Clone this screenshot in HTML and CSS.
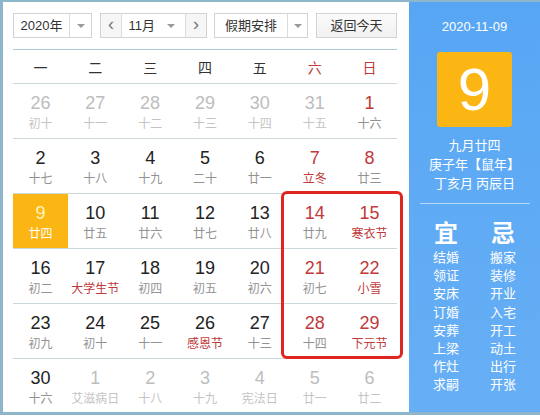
FILE: index.html
```html
<!DOCTYPE html>
<html lang="zh">
<head>
<meta charset="utf-8">
<link rel="stylesheet" href="styles.css">
</head>
<body>
<div class="frame">
  <div class="main">
    <div class="toolbar">
      <div class="select year"><span class="sel-text">2020年</span><span class="sel-arrow"><i class="tri"></i></span></div>
      <div class="select month">
        <span class="nav">&lsaquo;</span>
        <span class="sel-text mtext">11月<i class="tri"></i></span>
        <span class="nav">&rsaquo;</span>
      </div>
      <div class="select holiday"><span class="sel-text">假期安排</span><span class="sel-arrow"><i class="tri"></i></span></div>
      <div class="btn">返回今天</div>
    </div>
    <div class="week">
      <span>一</span><span>二</span><span>三</span><span>四</span><span>五</span><span class="red">六</span><span class="red">日</span>
    </div>
    <div class="days">
      <div class="cell other"><b>26</b><em>初十</em></div>
      <div class="cell other"><b>27</b><em>十一</em></div>
      <div class="cell other"><b>28</b><em>十二</em></div>
      <div class="cell other"><b>29</b><em>十三</em></div>
      <div class="cell other"><b>30</b><em>十四</em></div>
      <div class="cell other"><b>31</b><em>十五</em></div>
      <div class="cell wkend"><b>1</b><em>十六</em></div>

      <div class="cell"><b>2</b><em>十七</em></div>
      <div class="cell"><b>3</b><em>十八</em></div>
      <div class="cell"><b>4</b><em>十九</em></div>
      <div class="cell"><b>5</b><em>二十</em></div>
      <div class="cell"><b>6</b><em>廿一</em></div>
      <div class="cell wkend"><b>7</b><em class="fest">立冬</em></div>
      <div class="cell wkend"><b>8</b><em>廿三</em></div>

      <div class="cell today"><b>9</b><em>廿四</em></div>
      <div class="cell"><b>10</b><em>廿五</em></div>
      <div class="cell"><b>11</b><em>廿六</em></div>
      <div class="cell"><b>12</b><em>廿七</em></div>
      <div class="cell"><b>13</b><em>廿八</em></div>
      <div class="cell wkend"><b>14</b><em>廿九</em></div>
      <div class="cell wkend"><b>15</b><em class="fest">寒衣节</em></div>

      <div class="cell"><b>16</b><em>初二</em></div>
      <div class="cell"><b>17</b><em class="fest">大学生节</em></div>
      <div class="cell"><b>18</b><em>初四</em></div>
      <div class="cell"><b>19</b><em>初五</em></div>
      <div class="cell"><b>20</b><em>初六</em></div>
      <div class="cell wkend"><b>21</b><em>初七</em></div>
      <div class="cell wkend"><b>22</b><em class="fest">小雪</em></div>

      <div class="cell"><b>23</b><em>初九</em></div>
      <div class="cell"><b>24</b><em>初十</em></div>
      <div class="cell"><b>25</b><em>十一</em></div>
      <div class="cell"><b>26</b><em class="fest">感恩节</em></div>
      <div class="cell"><b>27</b><em>十三</em></div>
      <div class="cell wkend"><b>28</b><em>十四</em></div>
      <div class="cell wkend"><b>29</b><em class="fest">下元节</em></div>

      <div class="cell last"><b>30</b><em>十六</em></div>
      <div class="cell last other"><b>1</b><em>艾滋病日</em></div>
      <div class="cell last other"><b>2</b><em>十八</em></div>
      <div class="cell last other"><b>3</b><em>十九</em></div>
      <div class="cell last other"><b>4</b><em>宪法日</em></div>
      <div class="cell last other"><b>5</b><em>廿一</em></div>
      <div class="cell last other"><b>6</b><em>廿二</em></div>
    </div>
    <div class="mark"></div>
  </div>
  <div class="side">
    <div class="date">2020-11-09</div>
    <div class="bigday">9</div>
    <div class="lunar">
      <div>九月廿四</div>
      <div>庚子年【鼠年】</div>
      <div>丁亥月 丙辰日</div>
    </div>
    <div class="yiji">
      <div class="col">
        <div class="head">宜</div>
        <div>结婚</div><div>领证</div><div>安床</div><div>订婚</div><div>安葬</div><div>上梁</div><div>作灶</div><div>求嗣</div>
      </div>
      <div class="col">
        <div class="head">忌</div>
        <div>搬家</div><div>装修</div><div>开业</div><div>入宅</div><div>开工</div><div>动土</div><div>出行</div><div>开张</div>
      </div>
    </div>
  </div>
</div>
</body>
</html>
```
FILE: styles.css
```css
* { box-sizing: border-box; }
html, body { margin: 0; padding: 0; background: #fff; }
body { font-family: "Liberation Sans", "Noto Sans CJK SC", sans-serif; color: #333; }

.frame {
  width: 540px;
  height: 415px;
  display: flex;
  border-top: 2px solid #8db6ca;
  border-left: 3px solid #8db6ca;
  border-bottom: 3px solid #8db6ca;
}

.main {
  position: relative;
  width: 406px;
  padding: 11px 12px 0 10px;
}

.toolbar {
  display: flex;
  height: 25px;
  font-size: 13px;
  font-family: "Liberation Sans", "Noto Sans CJK SC", sans-serif;
  color: #333;
}
.select {
  display: flex;
  border: 1px solid #d3d3d3;
  background: #fff;
  height: 25px;
  line-height: 23px;
}
.year { width: 79px; margin-right: 8px; }
.year .sel-text { width: 55px; text-align: center; }
.month { width: 107px; margin-right: 7px; }
.holiday { width: 94px; margin-right: 8px; }
.holiday .sel-text { width: 72px; text-align: center; }
.sel-arrow {
  flex: 1;
  border-left: 1px solid #dcdcdc;
  display: flex;
  align-items: center;
  justify-content: center;
}
.tri {
  display: inline-block;
  width: 0; height: 0;
  border-left: 4px solid transparent;
  border-right: 4px solid transparent;
  border-top: 4px solid #9a9a9a;
}
.nav {
  width: 21px;
  background: #f6f6f6;
  text-align: center;
  font-size: 18px;
  color: #777;
  line-height: 21px;
}
.month .nav:first-child { border-right: 1px solid #dcdcdc; }
.month .nav:last-child { border-left: 1px solid #dcdcdc; }
.mtext {
  flex: 1;
  display: flex;
  align-items: center;
  justify-content: flex-end;
  gap: 12px;
  padding-right: 10px;
}
.btn {
  width: 81px;
  height: 25px;
  line-height: 23px;
  border: 1px solid #d3d3d3;
  background: linear-gradient(#fbfbfb, #f1f1f1);
  text-align: center;
}

.week {
  margin-top: 11px;
  width: 384px;
  height: 35px;
  border-top: 1px solid #a9c8d8;
  border-bottom: 1px solid #cdd6da;
  display: grid;
  grid-template-columns: repeat(7, 1fr);
  align-items: center;
  text-align: center;
  font-size: 14px;
  font-family: "Noto Sans CJK SC", sans-serif;
  color: #333;
}
.week .red { color: #c0393b; }

.days {
  width: 384px;
  display: grid;
  grid-template-columns: repeat(7, 1fr);
}
.cell {
  height: 55px;
  border-bottom: 1px solid #cdd6da;
  text-align: center;
  padding-top: 9px;
}
.cell.last { border-bottom: none; height: 54px; }
.cell b {
  display: block;
  font-weight: normal;
  font-size: 18px;
  line-height: 20px;
  color: #222;
}
.cell em {
  display: block;
  font-style: normal;
  font-size: 12px;
  line-height: 20px;
  color: #929292;
  font-family: "Noto Sans CJK SC", sans-serif;
}
.cell.wkend b { color: #c0393b; }
.cell em.fest { color: #c0393b; }
.cell.other b { color: #bdbdbd; }
.cell.other em { color: #c4c4c4; }
.cell.today { background: #fbb614; }
.cell.today b { color: #fff3b8; }
.cell.today em { color: #fff; }

.mark {
  position: absolute;
  left: 278px;
  top: 189px;
  width: 122px;
  height: 168px;
  border: 3px solid #e0241f;
  border-radius: 6px;
}

.side {
  flex: 1;
  background: linear-gradient(#57a6f4, #67aff5);
  color: #fff;
  display: flex;
  flex-direction: column;
  align-items: center;
  padding-top: 16px;
}
.date {
  font-size: 13px;
  line-height: 18px;
}
.bigday {
  margin-top: 16px;
  width: 75px;
  height: 75px;
  background: #fbb614;
  border-radius: 3px;
  font-size: 60px;
  line-height: 75px;
  text-align: center;
  color: #fff;
}
.lunar {
  margin-top: 8px;
  font-family: "Noto Sans CJK SC", sans-serif;
  font-size: 13px;
  line-height: 19px;
  text-align: center;
  width: 110px;
  padding-bottom: 11px;
  border-bottom: 1px solid rgba(255,255,255,0.55);
}
.yiji {
  margin-top: 14px;
  display: grid;
  grid-template-columns: 57px 57px;
  font-family: "Noto Sans CJK SC", sans-serif;
  font-size: 13px;
  line-height: 18.2px;
  text-align: center;
}
.yiji .head {
  font-size: 24px;
  font-weight: bold;
  line-height: 28px;
  margin-bottom: 2px;
}
```
